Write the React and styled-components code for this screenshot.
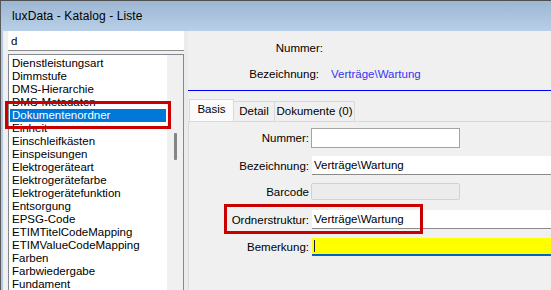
import React from "react";
import styled, { createGlobalStyle } from "styled-components";

const GlobalStyle = createGlobalStyle`
  html, body {
    margin: 0;
    padding: 0;
    background: #f0f0f0;
  }
  body {
    font-family: "Liberation Sans", Arial, sans-serif;
    font-size: 11.5px;
    color: #000;
  }
`;

const Window = styled.div`
  position: relative;
  width: 551px;
  height: 290px;
  overflow: hidden;
  box-sizing: border-box;
  border-top: 1px solid #4f4f4f;
  border-left: 1px solid #5a5a5a;
  display: flex;
  flex-direction: column;
  background: #f0f0f0;
`;

const TitleBar = styled.div`
  height: 30px;
  flex: none;
  display: flex;
  align-items: center;
  padding-left: 11px;
  background: linear-gradient(#9db6d2, #b9cfe8);
  font-size: 12px;
  letter-spacing: 0.1px;
`;

const Body = styled.div`
  flex: 1;
  display: flex;
  min-height: 0;
  border-left: 2px solid #b4cae3;
`;

const LeftPane = styled.div`
  width: 176px;
  flex: none;
  padding-left: 5px;
  display: flex;
  flex-direction: column;
`;

const Search = styled.div`
  height: 19px;
  flex: none;
  background: #fff;
  border-bottom: 1px solid #8c8c8c;
  padding-left: 3px;
  display: flex;
  align-items: center;
  margin-bottom: 3px;
`;

const ListBox = styled.div`
  flex: 1;
  display: flex;
  background: #fff;
  border: 1px solid #828790;
  border-bottom: none;
  overflow: hidden;
`;

const Items = styled.div`
  flex: 1;
  padding-top: 2px;
  display: flex;
  flex-direction: column;
`;

const Item = styled.div`
  height: 13px;
  line-height: 13px;
  margin: 0 1px;
  padding-left: 2px;
  white-space: nowrap;
  background: ${(p) => (p.$selected ? "#0078d7" : "transparent")};
  color: ${(p) => (p.$selected ? "#fff" : "#000")};
`;

const ScrollTrack = styled.div`
  width: 16px;
  flex: none;
  background: #f0f0f0;
  display: flex;
  justify-content: center;
  padding-top: 78px;
`;

const Thumb = styled.div`
  width: 3px;
  height: 27px;
  border-radius: 1px;
  background: #858585;
`;

const Splitter = styled.div`
  width: 4px;
  flex: none;
  background: #ebebeb;
`;

const RightPane = styled.div`
  flex: 1;
  min-width: 0;
  display: flex;
  flex-direction: column;
`;

const Header = styled.div`
  display: grid;
  grid-template-columns: 135px 1fr;
  grid-auto-rows: 26px;
  column-gap: 8px;
  align-items: center;
  padding: 4px 0 3px;
  border-bottom: 1px solid #0000ff;
`;

const HeadLabel = styled.div`
  text-align: right;
  padding-right: ${(p) => p.$shift || 0}px;
`;

const HeadValue = styled.div`
  color: #3434f0;
`;

const TabStrip = styled.div`
  display: flex;
  align-items: flex-end;
  margin-top: 8px;
  padding-left: 1px;
  height: 22px;
`;

const Tab = styled.div`
  box-sizing: border-box;
  width: ${(p) => p.$w}px;
  height: ${(p) => (p.$active ? 22 : 20)}px;
  border: 1px solid #d9d9d9;
  border-bottom: none;
  margin-left: ${(p) => (p.$first ? 0 : -1)}px;
  background: ${(p) => (p.$active ? "#fbfbfb" : "#f0f0f0")};
  display: flex;
  align-items: center;
  justify-content: center;
  padding-bottom: ${(p) => (p.$active ? 3 : 1)}px;
  white-space: nowrap;
  position: relative;
  z-index: ${(p) => (p.$active ? 1 : 0)};
`;

const TabPage = styled.div`
  flex: 1;
  border-top: 1px solid #d9d9d9;
  border-left: 1px solid #dadada;
  padding-top: 6px;
  display: flex;
  flex-direction: column;
`;

const Row = styled.div`
  display: flex;
  align-items: center;
  margin-bottom: ${(p) => p.$gap}px;
`;

const Label = styled.div`
  width: 120px;
  flex: none;
  text-align: right;
  white-space: nowrap;
`;

const Field = styled.div`
  box-sizing: border-box;
  margin-left: ${(p) => (p.$boxed ? 2 : 3)}px;
  width: ${(p) => (p.$short ? "149px" : "260px")};
  height: ${(p) => p.$h}px;
  flex: none;
  display: flex;
  align-items: center;
  padding-left: 2px;
  white-space: nowrap;
  background: ${(p) => p.$bg || "#fff"};
  border: ${(p) => (p.$boxed ? `1px solid ${p.$boxed}` : "none")};
  border-radius: ${(p) => (p.$round ? 2 : 0)}px;
  border-bottom: ${(p) =>
    p.$line ? `${p.$lineW || 1}px solid ${p.$line}` : p.$boxed ? `1px solid ${p.$boxed}` : "none"};
`;

const Caret = styled.span`
  display: block;
  width: 1px;
  height: 12px;
  background: #1a1a40;
`;

/* red annotation frames drawn over the screenshot */
const Mark = styled.div`
  position: absolute;
  box-sizing: border-box;
  left: ${(p) => p.$x}px;
  top: ${(p) => p.$y}px;
  width: ${(p) => p.$w}px;
  height: ${(p) => p.$h}px;
  border: 3px solid #c80000;
  pointer-events: none;
`;

const entries = [
  "Dienstleistungsart",
  "Dimmstufe",
  "DMS-Hierarchie",
  "DMS-Metadaten",
  "Dokumentenordner",
  "Einheit",
  "Einschleifkästen",
  "Einspeisungen",
  "Elektrogeräteart",
  "Elektrogerätefarbe",
  "Elektrogerätefunktion",
  "Entsorgung",
  "EPSG-Code",
  "ETIMTitelCodeMapping",
  "ETIMValueCodeMapping",
  "Farben",
  "Farbwiedergabe",
  "Fundament",
];

export default function App() {
  return (
    <>
      <GlobalStyle />
      <Window>
        <TitleBar>luxData - Katalog - Liste</TitleBar>
        <Body>
          <LeftPane>
            <Search>d</Search>
            <ListBox>
              <Items>
                {entries.map((e) => (
                  <Item key={e} $selected={e === "Dokumentenordner"}>
                    {e}
                  </Item>
                ))}
              </Items>
              <ScrollTrack>
                <Thumb />
              </ScrollTrack>
            </ListBox>
          </LeftPane>
          <Splitter />
          <RightPane>
            <Header>
              <HeadLabel>Nummer:</HeadLabel>
              <HeadValue />
              <HeadLabel $shift={4}>Bezeichnung:</HeadLabel>
              <HeadValue>Verträge\Wartung</HeadValue>
            </Header>
            <TabStrip>
              <Tab $w={45} $active $first>
                Basis
              </Tab>
              <Tab $w={42}>Detail</Tab>
              <Tab $w={81}>Dokumente (0)</Tab>
            </TabStrip>
            <TabPage>
              <Row $gap={8}>
                <Label>Nummer:</Label>
                <Field $short $h={20} $boxed="#a3a3a3" />
              </Row>
              <Row $gap={8}>
                <Label>Bezeichnung:</Label>
                <Field $h={19} $line="#8a8a8a">
                  Verträge\Wartung
                </Field>
              </Row>
              <Row $gap={10}>
                <Label>Barcode</Label>
                <Field $short $h={17} $bg="#ececec" $boxed="#d2d2d2" $round />
              </Row>
              <Row $gap={9}>
                <Label>Ordnerstruktur:</Label>
                <Field $h={19} $line="#8a8a8a">
                  Verträge\Wartung
                </Field>
              </Row>
              <Row $gap={0}>
                <Label>Bemerkung:</Label>
                <Field $h={18} $bg="#ffff00" $line="#0066c4" $lineW={2}>
                  <Caret />
                </Field>
              </Row>
            </TabPage>
          </RightPane>
        </Body>
        <Mark $x={4} $y={100} $w={166} $h={28} />
        <Mark $x={223} $y={203} $w={199} $h={30} />
      </Window>
    </>
  );
}
